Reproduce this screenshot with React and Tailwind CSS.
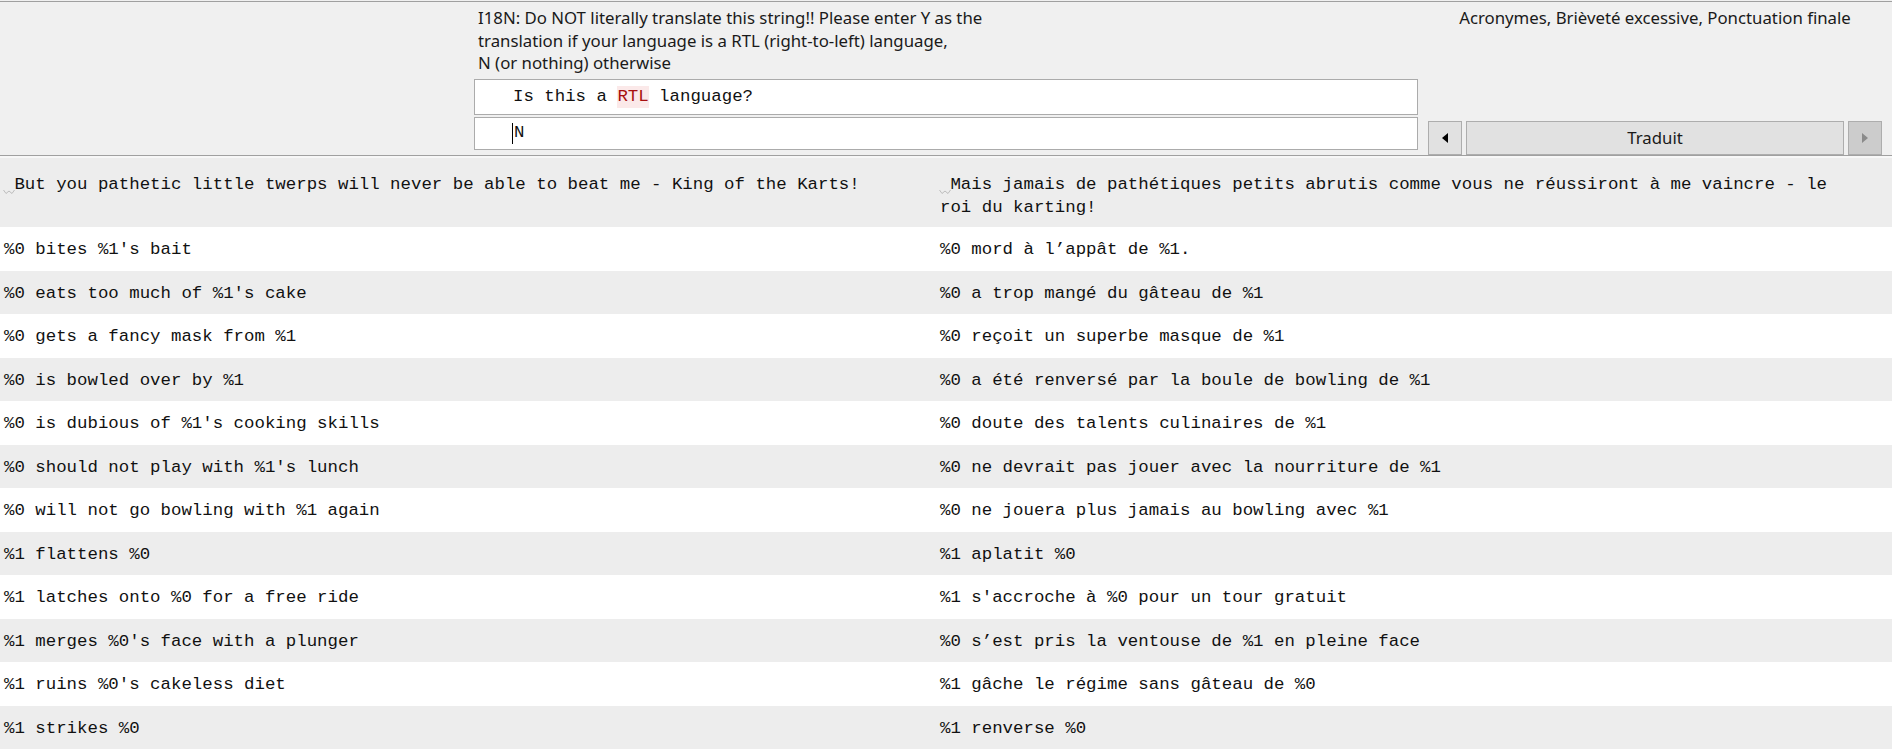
import React from "react";

/* ─── Data ───────────────────────────────────────────────────────────────── */
const ROWS = [
  ["%0 bites %1's bait", "%0 mord à l’appât de %1."],
  ["%0 eats too much of %1's cake", "%0 a trop mangé du gâteau de %1"],
  ["%0 gets a fancy mask from %1", "%0 reçoit un superbe masque de %1"],
  ["%0 is bowled over by %1", "%0 a été renversé par la boule de bowling de %1"],
  ["%0 is dubious of %1's cooking skills", "%0 doute des talents culinaires de %1"],
  ["%0 should not play with %1's lunch", "%0 ne devrait pas jouer avec la nourriture de %1"],
  ["%0 will not go bowling with %1 again", "%0 ne jouera plus jamais au bowling avec %1"],
  ["%1 flattens %0", "%1 aplatit %0"],
  ["%1 latches onto %0 for a free ride", "%1 s'accroche à %0 pour un tour gratuit"],
  ["%1 merges %0's face with a plunger", "%0 s’est pris la ventouse de %1 en pleine face"],
  ["%1 ruins %0's cakeless diet", "%1 gâche le régime sans gâteau de %0"],
  ["%1 strikes %0", "%1 renverse %0"],
];

const mono = "font-['Liberation_Mono','Courier_New',monospace] text-[17.4px] leading-[22.7px] text-[#111]";
const sans = "font-['Noto_Sans','Segoe_UI',sans-serif] text-[16.8px] text-[#1a1a1a]";

/* ─── Leading-space marker ───────────────────────────────────────────────── */
const SpaceMark = () => (
  <span className="relative inline-block w-[1ch]">
    {"\u00a0"}
    <svg
      className="absolute left-[-1px] top-[15px]"
      width="12"
      height="6"
      viewBox="0 0 12 6"
      fill="none"
    >
      <polyline points="0.5,1 3,4.5 6,2 9,4.5 11.5,1" stroke="#bdbdbd" strokeWidth="1" />
    </svg>
  </span>
);

/* ─── Arrow buttons ──────────────────────────────────────────────────────── */
const ArrowBtn = ({ dir, disabled }) => (
  <button
    type="button"
    className={`w-[34px] h-[34px] flex items-center justify-center border border-[#adadad]
      ${disabled ? "bg-[#cccccc]" : "bg-[#e1e1e1]"}`}
  >
    <svg width="6" height="10" viewBox="0 0 6 10">
      {dir === "left" ? (
        <polygon points="6,0 6,10 0,5" fill={disabled ? "#8a8a8a" : "#000"} />
      ) : (
        <polygon points="0,0 0,10 6,5" fill={disabled ? "#8a8a8a" : "#000"} />
      )}
    </svg>
  </button>
);

/* ─── Header ─────────────────────────────────────────────────────────────── */
const Header = () => (
  <div className="h-[155px] flex border-t border-b border-[#a0a0a0] bg-[#f0f0f0]">
    <div className="w-[474px] shrink-0" />

    <div className="w-[944px] shrink-0 flex flex-col">
      <div className={`${sans} leading-[22.5px] pt-[5px] pl-[4px]`}>
        I18N: Do NOT literally translate this string!! Please enter Y as the
        <br />
        translation if your language is a RTL (right-to-left) language,
        <br />
        N (or nothing) otherwise
      </div>

      <div className="mt-auto flex flex-col gap-[2px] pb-[5px]">
        <div className={`h-[36px] flex items-center bg-white border border-[#ababab] pl-[38px] ${mono}`}>
          <span className="whitespace-pre">Is this a </span>
          <span className="bg-[#fbe9e9] text-[#a80f0f]">RTL</span>
          <span className="whitespace-pre"> language?</span>
        </div>
        <div className={`h-[33px] flex items-center bg-white border border-[#ababab] pl-[37px] ${mono}`}>
          <span className="w-px h-[21px] bg-black" />
          <span className="ml-[1px]">N</span>
        </div>
      </div>
    </div>

    <div className="w-[10px] shrink-0" />

    <div className="w-[454px] shrink-0 flex flex-col">
      <div className={`${sans} leading-[22.5px] pt-[5px] text-center`}>
        Acronymes, Brièveté excessive, Ponctuation finale
      </div>
      <div className="mt-auto flex gap-[4px]">
        <ArrowBtn dir="left" />
        <button
          type="button"
          className={`flex-1 h-[34px] bg-[#e1e1e1] border border-[#adadad] ${sans} leading-none`}
        >
          Traduit
        </button>
        <ArrowBtn dir="right" disabled />
      </div>
    </div>
  </div>
);

/* ─── Rows ───────────────────────────────────────────────────────────────── */
const Row = ({ src, dst, gray }) => (
  <div className={`h-[43.5px] flex ${gray ? "bg-[#ededed]" : "bg-white"} ${mono}`}>
    <div className="w-[936px] shrink-0 pl-[4px] pt-[12px] whitespace-pre">{src}</div>
    <div className="flex-1 pl-[4px] pt-[12px] whitespace-pre">{dst}</div>
  </div>
);

export default function App() {
  return (
    <div className="w-[1892px] h-[754px] overflow-hidden bg-white">
      <div className="h-px bg-[#f0f0f0]" />
      <Header />
      <div className="h-[2px] bg-[#f7f7f7]" />

      {/* long first entry, wraps on the right */}
      <div className={`h-[69px] flex bg-[#ededed] ${mono}`}>
        <div className="w-[936px] shrink-0 pl-[4px] pt-[16px]">
          <SpaceMark />
          But you pathetic little twerps will never be able to beat me - King of the Karts!
        </div>
        <div className="flex-1 pl-[4px] pr-[30px] pt-[16px]">
          <SpaceMark />
          Mais jamais de pathétiques petits abrutis comme vous ne réussiront à me vaincre - le roi du karting!
        </div>
      </div>

      {ROWS.map(([src, dst], i) => (
        <Row key={src} src={src} dst={dst} gray={i % 2 === 1} />
      ))}
    </div>
  );
}
